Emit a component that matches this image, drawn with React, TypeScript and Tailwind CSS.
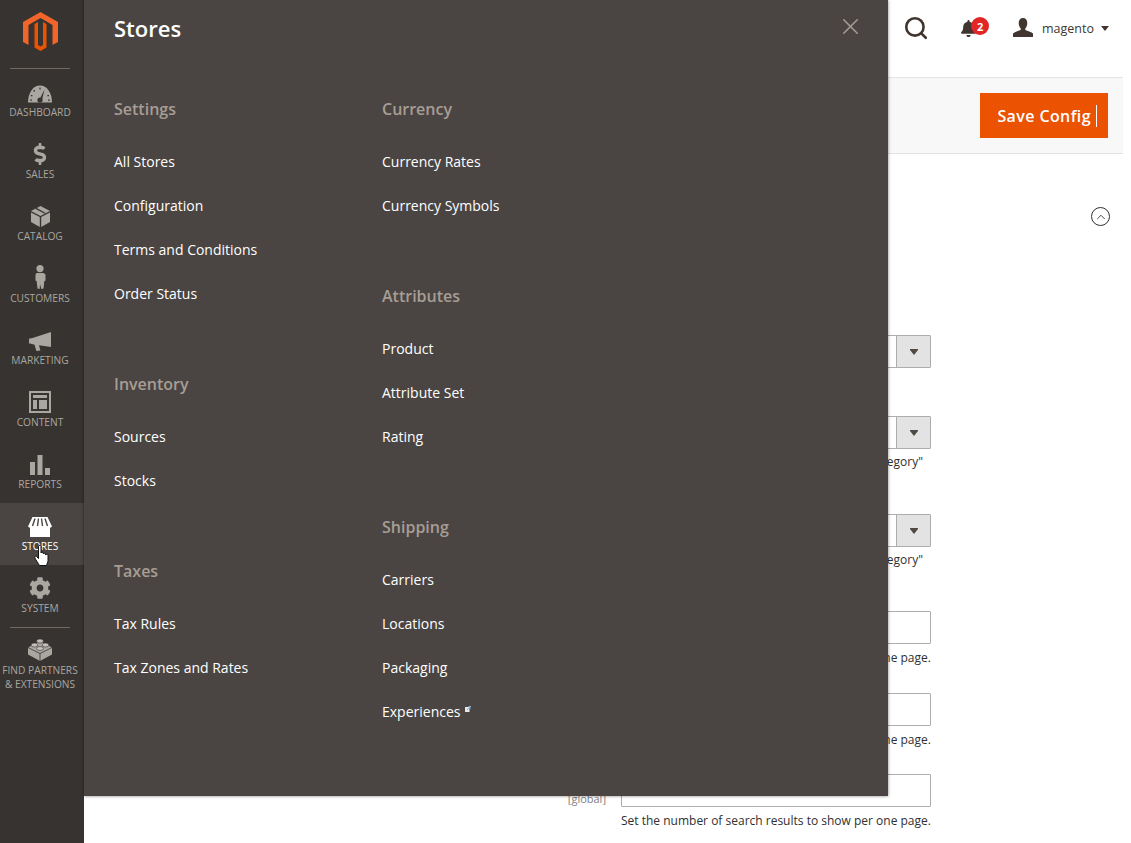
import { ChevronUp, Search, X } from "lucide-react";
import { FaBell, FaCog, FaDollarSign } from "react-icons/fa";
import type { ReactNode } from "react";

const iconColor = "#aaa6a0";

function Gauge() {
  return (
    <svg width="24" height="18" viewBox="0 0 24 18">
      <path d="M0 17.5C0 8 5 .5 12 .5s12 7.5 12 17z" fill={iconColor} />
      <path d="M12 13.5 16.5 4.5 14 15z" fill="#373330" />
      <circle cx="12" cy="15" r="2.6" fill="#373330" />
      <g fill="#373330">
        <rect x="11.4" y="2.5" width="1.2" height="2" />
        <rect x="5.5" y="5" width="1.4" height="1.6" />
        <rect x="2.8" y="10" width="1.6" height="1.3" />
        <rect x="2.2" y="14.5" width="1.8" height="1.2" />
        <rect x="20" y="14.5" width="1.8" height="1.2" />
        <rect x="19.4" y="10" width="1.6" height="1.3" />
      </g>
    </svg>
  );
}

function Box() {
  return (
    <svg width="19" height="21" viewBox="0 0 19 21">
      <path d="M9.5 0 19 5l-9.5 5L0 5z" fill={iconColor} />
      <path d="M0 6.5 8.8 11v10L0 16z" fill={iconColor} />
      <path d="M19 6.5 10.2 11v10l8.8-5z" fill={iconColor} />
      <path d="M5 2.4 14 7.2" stroke="#373330" strokeWidth="1.3" />
    </svg>
  );
}

function Person() {
  return (
    <svg width="12" height="24" viewBox="0 0 12 24">
      <circle cx="6" cy="3.6" r="3.6" fill={iconColor} />
      <path d="M2.5 8h7l2 1.5v6l-1.2.8-.8 7.2-2.2.5L6 19l-.3 5-2.2-.5-.8-7.2-1.2-.8v-6z" fill={iconColor} />
    </svg>
  );
}

function Megaphone() {
  return (
    <svg width="22" height="19" viewBox="0 0 22 19">
      <path d="M22 0v15L10 13.2l1.4 5.2-4 .6-2-6.5L2 12V6.5z" fill={iconColor} />
      <rect x="0" y="6.5" width="3" height="5" fill={iconColor} />
    </svg>
  );
}

function ContentIcon() {
  return (
    <svg width="22" height="22" viewBox="0 0 22 22">
      <path d="M0 0h22v22H0zM2 2v18h18V2z" fill={iconColor} fillRule="evenodd" />
      <rect x="4" y="4" width="14" height="3" fill={iconColor} />
      <rect x="4" y="9" width="4" height="9" fill={iconColor} />
      <rect x="10" y="9" width="8" height="9" fill={iconColor} />
    </svg>
  );
}

function Bars() {
  return (
    <svg width="20" height="20" viewBox="0 0 20 20">
      <rect x="0" y="7" width="5" height="13" fill={iconColor} />
      <rect x="7.5" y="0" width="5" height="20" fill={iconColor} />
      <rect x="15" y="13" width="5" height="7" fill={iconColor} />
    </svg>
  );
}

function Store() {
  return (
    <svg width="24" height="20" viewBox="0 0 24 20">
      <path d="M2 10h20v10H2z" fill="#fff" />
      <path d="M4.500 0h15L24 9.500c-1.500 1.700-3 1.700-4 .5-1 1.200-3 1.200-4 0-1 1.200-3 1.200-4 0-1 1.200-3 1.200-4 0-1 1.200-3 1.200-4 0-1 1.200-2.500 1.200-4-.5z" fill="#fff" />
      <path d="M7 1.500 4.500 9M10.500 1.500 9.500 9M13.500 1.500 14.500 9M17 1.500 19.500 9" stroke="#4a4542" strokeWidth="1.400" />
    </svg>
  );
}

function Lego() {
  return (
    <svg width="24" height="23" viewBox="0 0 24 23">
      <path d="M12 3 24 9.500v7L12 23 0 16.500v-7z" fill={iconColor} />
      <path d="M12 15.500V23" stroke="#373330" strokeWidth="0.800" />
      <path d="M0 9.500 12 15.500 24 9.500" stroke="#373330" strokeWidth="0.800" fill="none" />
      <ellipse cx="12" cy="3" rx="3.400" ry="2" fill="#c4c0ba" stroke="#373330" strokeWidth="0.600" />
      <ellipse cx="6.500" cy="7" rx="3.400" ry="2" fill="#c4c0ba" stroke="#373330" strokeWidth="0.600" />
      <ellipse cx="17.500" cy="7" rx="3.400" ry="2" fill="#c4c0ba" stroke="#373330" strokeWidth="0.600" />
      <ellipse cx="12" cy="10.500" rx="3.400" ry="2" fill="#c4c0ba" stroke="#373330" strokeWidth="0.600" />
    </svg>
  );
}

function Logo() {
  return (
    <svg width="35" height="39" viewBox="0 0 35 39">
      <path d="M17.500 0 35 10v20l-5.500 3V13l-12-7-12 7v20L0 30V10z" fill="#f1652a" />
      <path d="M17.500 39l-6-3.500V12l3.500-2v23l2.500 1.500L20 33V10l3.500 2v23.500z" fill="#eb5202" />
    </svg>
  );
}

function UserBust() {
  return (
    <svg width="20" height="19" viewBox="0 0 20 19" className="mt-[1px]">
      <path d="M10 0c2.800 0 4.300 2 4.300 5 0 2.500-1 4.500-2 5.500v1.500c2.500 1 5.500 1.700 7.700 3.500V19H0v-3.500C2.200 13.700 5.200 13 7.700 12v-1.500c-1-1-2-3-2-5.500 0-3 1.500-5 4.300-5z" fill="#41362f" />
    </svg>
  );
}

// hand cursor sitting on top of the Stores item
function HandCursor() {
  return (
    <svg className="absolute left-[34px] top-[545px]" width="17" height="22" viewBox="0 0 17 22">
      <path
        d="M4.500 1.500c0-1.300 2.500-1.300 2.500 0V8c0-1 2.300-1 2.300 0v1c0-1 2.300-1 2.300 0v1c0-1 2.400-1 2.400.3v5.200c0 2-1 3-1.500 5H5.500C4.500 18.500 1 14 .8 12.500c-.2-1.500 1.500-1.500 2.200-.5l1.500 1.500z"
        fill="#fff"
        stroke="#111"
        strokeWidth="1"
      />
    </svg>
  );
}

const navItems: { label: string; icon: ReactNode }[] = [
  { label: "Dashboard", icon: <Gauge /> },
  { label: "Sales", icon: <FaDollarSign size={22} color={iconColor} /> },
  { label: "Catalog", icon: <Box /> },
  { label: "Customers", icon: <Person /> },
  { label: "Marketing", icon: <Megaphone /> },
  { label: "Content", icon: <ContentIcon /> },
  { label: "Reports", icon: <Bars /> },
];

function NavItem({ label, icon, active }: { label: string; icon: ReactNode; active?: boolean }) {
  return (
    <div
      className={
        active
          ? "flex h-[62px] flex-col items-center bg-[#4a4542] pr-[4px] text-white"
          : "flex h-[62px] flex-col items-center pr-[4px] text-[#aaa6a0]"
      }
    >
      <div className="flex h-[34px] items-end justify-center">{icon}</div>
      <div className="mt-[1px] text-[10.200px] uppercase leading-[16px]">{label}</div>
    </div>
  );
}

function Sidebar() {
  return (
    <aside className="flex h-[843px] w-[84px] shrink-0 flex-col bg-[#373330]">
      <div className="flex h-[68px] flex-col items-center pr-[4px] pt-[12px]">
        <Logo />
      </div>
      <div className="ml-[10px] mr-[14px] h-px bg-[#736963]" />
      {navItems.map((item) => (
        <NavItem key={item.label} label={item.label} icon={item.icon} />
      ))}
      <NavItem label="Stores" icon={<Store />} active />
      <NavItem label="System" icon={<FaCog size={22} color={iconColor} />} />
      <div className="ml-[10px] mr-[14px] h-px bg-[#736963]" />
      <div className="flex flex-col items-center pr-[4px] text-[#aaa6a0]">
        <div className="flex h-[33px] items-end justify-center">
          <Lego />
        </div>
        <div className="mt-[2px] whitespace-nowrap text-center text-[10.200px] uppercase leading-[14px]">
          Find Partners
          <br />& Extensions
        </div>
      </div>
    </aside>
  );
}

function MenuGroup({ title, links }: { title: string; links: ReactNode[] }) {
  return (
    <div className="mb-[53.500px]">
      <div className="mb-[15.500px] flex h-[30px] items-center text-[16px] font-semibold text-[#a79d95]">{title}</div>
      {links.map((l, i) => (
        <div key={i} className="flex h-[44px] items-center text-[14px] text-white">
          {l}
        </div>
      ))}
    </div>
  );
}

function StoresPanel() {
  return (
    <div className="absolute left-[84px] top-0 h-[796px] w-[804px] bg-[#4a4542] pl-[30px] shadow-[0_0_3px_rgba(0,0,0,0.5)]">
      <div className="flex h-[56px] items-center text-[22px] font-semibold text-white">Stores</div>
      <X className="absolute right-[24px] top-[13px]" size={27} color="#a79d95" strokeWidth={1.500} absoluteStrokeWidth />
      <div className="mt-[38px] flex">
        <div className="w-[268px]">
          <MenuGroup title="Settings" links={["All Stores", "Configuration", "Terms and Conditions", "Order Status"]} />
          <MenuGroup title="Inventory" links={["Sources", "Stocks"]} />
          <MenuGroup title="Taxes" links={["Tax Rules", "Tax Zones and Rates"]} />
        </div>
        <div>
          <MenuGroup title="Currency" links={["Currency Rates", "Currency Symbols"]} />
          <MenuGroup title="Attributes" links={["Product", "Attribute Set", "Rating"]} />
          <MenuGroup
            title="Shipping"
            links={[
              "Carriers",
              "Locations",
              "Packaging",
              <span className="flex items-start" key="exp">
                Experiences
                <svg className="ml-[5px] mt-[5px]" width="6" height="6" viewBox="0 0 6 6">
                  <path d="M0 1h4.500v5H0z" fill="#e8e8e8" />
                  <path d="M2 4 5.500.5M3.500.5h2.500V3" stroke="#7fb4e0" strokeWidth="1" fill="none" />
                </svg>
              </span>,
            ]}
          />
        </div>
      </div>
    </div>
  );
}

function SelectRow({ hint, className }: { hint?: string; className: string }) {
  return (
    <div className={className}>
      <div className="flex h-[33px] w-[310px] rounded-[1px] border border-[#adadad] bg-white">
        <div className="flex-1" />
        <div className="flex w-[34px] items-center justify-center border-l border-[#adadad] bg-[#e3e3e3]">
          <svg width="8" height="6" viewBox="0 0 8 6">
            <path d="M0 0h8v1L4 6 0 1z" fill="#514943" />
          </svg>
        </div>
      </div>
      {hint && <div className="mt-[4px] h-[17px] w-[302px] text-right text-[12px] leading-[17px] text-[#303030]">{hint}</div>}
    </div>
  );
}

function InputRow({ className, scope }: { className: string; scope?: boolean }) {
  return (
    <div className={className}>
      <div className="relative h-[33px] w-[310px] rounded-[1px] border border-[#adadad] bg-white">
        {scope && <span className="absolute right-[324px] top-[16px] text-[11px] leading-[16px] text-[#808080]">[global]</span>}
      </div>
      <div className="mt-[5px] whitespace-nowrap text-[12px] leading-[17px] text-[#303030]">
        Set the number of search results to show per one page.
      </div>
    </div>
  );
}

export default function App() {
  return (
    <div className="relative flex h-[843px] w-[1131px] overflow-hidden bg-white font-['Open_Sans',sans-serif]">
      <Sidebar />
      <main className="w-[1039px]">
        <header className="flex h-[78px] items-start justify-end border-b border-[#e3e3e3] pt-[17px]">
          <Search size={26} color="#41362f" strokeWidth={2.400} className="-mt-[2px] mr-[31px]" />
          <div className="relative mr-[25px] mt-[3px] w-[28px]">
            <FaBell size={17} color="#41362f" />
            <span className="absolute left-[11px] top-[-3px] flex h-[18px] w-[18px] items-center justify-center rounded-full bg-[#e22626] text-[11px] font-bold leading-none text-white">
              2
            </span>
          </div>
          <UserBust />
          <span className="ml-[9px] mt-[3px] text-[12.500px] leading-[18px] text-[#41362f]">magento</span>
          <svg className="ml-[7px] mr-[14px] mt-[9px]" width="8" height="5" viewBox="0 0 8 5">
            <path d="M0 0h8L4 5z" fill="#41362f" />
          </svg>
        </header>
        <div className="flex h-[76px] items-start justify-end border-b border-[#e3e3e3] bg-[#f8f8f8] pr-[15px] pt-[15px]">
          <button className="flex h-[45px] w-[128px] items-center justify-end bg-[#eb5202] pr-[11px] text-[16px] font-semibold tracking-[0.4px] text-white">
            Save Config
            <span className="ml-[5px] h-[22px] w-px bg-white" />
          </button>
        </div>
        <div className="flex justify-end pr-[13px] pt-[53px]">
          <div className="flex h-[19px] w-[19px] items-center justify-center rounded-full border border-[#303030]">
            <ChevronUp size={14} color="#303030" strokeWidth={1.500} />
          </div>
        </div>
        <div className="ml-[537px]">
          <SelectRow className="mt-[109px]" />
          <SelectRow className="mt-[48px]" hint={'Applies to "Category"'} />
          <SelectRow className="mt-[44px]" hint={'Applies to "Category"'} />
          <InputRow className="mt-[43px]" />
          <InputRow className="mt-[27px]" />
          <InputRow className="mt-[26px]" scope />
        </div>
      </main>
      <StoresPanel />
      <HandCursor />
    </div>
  );
}
